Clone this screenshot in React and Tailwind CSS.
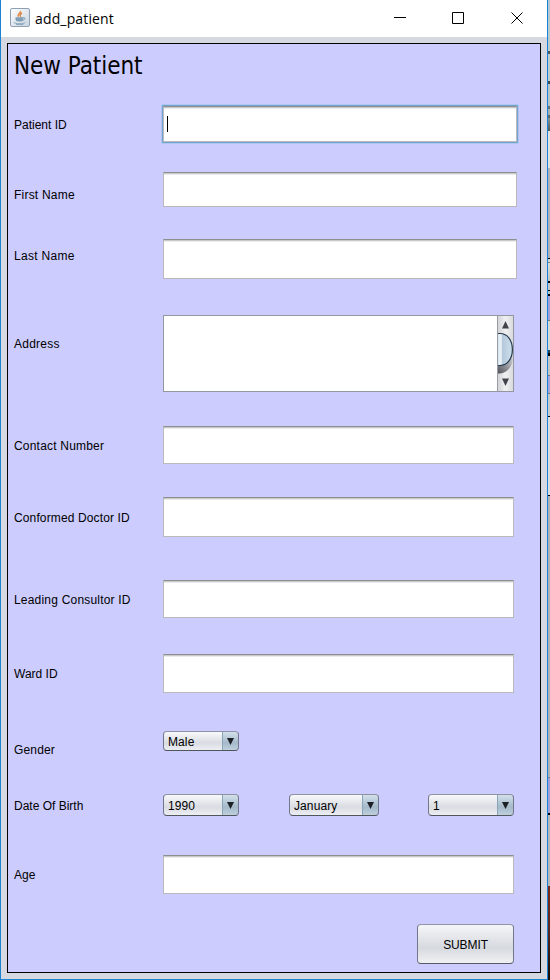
const edge = [
  ['h-[20px]', 'bg-[#b4c6d0]'], ['h-[31px]', 'bg-[#b9cbd0]'], ['h-[3px]', 'bg-[#4b5961]'],
  ['h-[27px]', 'bg-[#bccdd0]'], ['h-[3px]', 'bg-[#3c4a50]'], ['h-[22px]', 'bg-[#b5c6cb]'],
  ['h-[3px]', 'bg-[#64747a]'], ['h-[6px]', 'bg-[#a3b1b6]'], ['h-[3px]', 'bg-[#5a676b]'],
  ['h-[13px]', 'bg-linear-to-b from-[#89979a] to-[#4e5a5c]'], ['h-[37px]', 'bg-[#e2e2e2]'],
  ['h-[90px]', 'bg-[#b2b1bb]'], ['h-[1px]', 'bg-black'], ['h-[3px]', 'bg-[#d6d6d6]'],
  ['h-[1px]', 'bg-[#808080]'], ['h-[18px]', 'bg-linear-to-b from-[#e0e0e0] to-[#c0c0c0]'],
  ['h-[2px]', 'bg-black'], ['h-[7px]', 'bg-[#c4c4ca]'], ['h-[1px]', 'bg-black'],
  ['h-[3px]', 'bg-[#a9c3d2]'], ['h-[2px]', 'bg-black'], ['h-[24px]', 'bg-[#a2a0dc]'],
  ['h-[1px]', 'bg-[#777]'], ['h-[29px]', 'bg-[#d6dad8]'], ['h-[3px]', 'bg-[#1b4a70]'],
  ['h-[3px]', 'bg-black'], ['h-[19px]', 'bg-[#c6c6c8]'], ['h-[1px]', 'bg-[#777]'],
  ['h-[17px]', 'bg-[#a7a5dd]'], ['h-[1px]', 'bg-[#777]'], ['h-[22px]', 'bg-[#c9c9cd]'],
  ['h-[1px]', 'bg-black'], ['h-[78px]', 'bg-[#dcdce0]'], ['h-[1px]', 'bg-black'],
  ['h-[281px]', 'bg-[#b2b1b8]'], ['h-[1px]', 'bg-[#808080]'], ['h-[35px]', 'bg-[#a2a0dc]'],
  ['h-[2px]', 'bg-black'], ['h-[71px]', 'bg-[#b7b7bb]'],
  ['h-[94px]', 'bg-linear-to-b from-[#7c2c1c] via-[#58281e] to-[#100c0c]'],
];

function JavaIcon() {
  return (
    <svg className="block shrink-0" width="20" height="20" viewBox="0 0 20 20" fill="none">
      <defs>
        <linearGradient id="tile" x1="0" y1="0" x2="1" y2="1">
          <stop stopColor="#fff" />
          <stop offset="1" stopColor="#c8d4df" />
        </linearGradient>
      </defs>
      <rect x=".5" y=".5" width="19" height="18" rx="1.5" fill="url(#tile)" stroke="#8fa0b4" />
      <path d="M10.500 3c.7 1.900-3.300 2.700-2 5.700M12 5c-2 1.200-2.300 1.900-1.200 3.900" stroke="#e08a48" strokeWidth="1.500" />
      <path d="M5.500 9.300h7.700v2.300c0 1.300-1 2-2.300 2H8c-1.300 0-2.500-.7-2.500-2z" fill="#7f9db6" />
      <path d="M13 9.800c2.500-.9 2.800 1.700 0 2.600" stroke="#7f9db6" />
      <path d="M3.500 14.300c2 1.800 10 1.800 12 0M6 16.300c2.500.5 5 .5 7.500 0" stroke="#8ba5bb" />
    </svg>
  );
}

function Row({ className, labelClass, label, children }) {
  return (
    <div className={`flex items-start ${className}`}>
      <div className={`w-[149px] shrink-0 text-[12px] leading-4 whitespace-nowrap ${labelClass}`}>{label}</div>
      {children}
    </div>
  );
}

function Field({ className }) {
  return (
    <div className={`border border-[#bababa] border-t-[#8d8e8f] bg-white shadow-[inset_0_1px_0_#c9c9c9,inset_0_2px_0_#ececec] ${className}`} />
  );
}

function Combo({ className, value }) {
  return (
    <div className={`flex overflow-hidden rounded-[4px] border border-[#72788a] border-t-[#8f92a5] border-b-[#50565e] bg-linear-to-b from-[#f8f9fb] via-[#d9dce2] via-60% to-[#eceef2] ${className}`}>
      <div className="flex grow items-center pt-px pl-1 text-[12px] leading-4 tracking-[0.1px]">{value}</div>
      <div className="-my-px -mr-px flex w-[17px] items-center justify-center rounded-r-[4px] border border-[#466079] border-l-[#8ba5b8] border-t-[#7590a6] bg-linear-to-b from-[#d3e0ea] via-[#a4b9ca] via-60% to-[#bfd0dd]">
        <svg width="7" height="7" viewBox="0 0 7 7"><path d="M0 0h7L3.500 7z" fill="#1c1f24" /></svg>
      </div>
    </div>
  );
}

function ScrollBar() {
  return (
    <div className="flex h-full w-[16px] flex-col items-center justify-between border-l border-[#9a9da5] bg-linear-to-r from-[#d2d5d8] via-[#f0f1f2] to-[#d8dadd]">
      <svg className="block" width="15" height="75" viewBox="0 0 15 75">
        <path d="M4 12.500h7L7.500 5z" fill="#40444a" />
        <defs>
          <linearGradient id="thumb">
            <stop stopColor="#b7cbdc" /><stop offset=".15" stopColor="#e9f1f7" />
            <stop offset=".3" stopColor="#dfe9f1" /><stop offset=".36" stopColor="#b3c8da" />
            <stop offset="1" stopColor="#cfe1ee" />
          </linearGradient>
          <linearGradient id="shade" x1="0" y1="1" x2="1" y2="0">
            <stop stopColor="#50545a" /><stop offset="1" stopColor="#d5d7da" />
          </linearGradient>
        </defs>
        <path d="M0 40H15C15 51 9 57.500 0 57.500z" fill="url(#shade)" />
        <path d="M-1 17.500H2C10 17.500 14.400 25 14.400 33.500S10 49.500 2 49.500H-1z" fill="url(#thumb)" stroke="#26394d" strokeWidth="1.200" />
        <path d="M4 62.500h7L7.500 70z" fill="#40444a" />
      </svg>
    </div>
  );
}

export default function App() {
  return (
    <div className="flex h-[980px] w-[550px] overflow-hidden font-['Liberation_Sans',Arial,sans-serif] text-black">
      <div className="flex w-[548px] shrink-0 flex-col border-x border-b border-[#1c82d4] bg-[#d6d9df]">
        <div className="flex h-[37px] shrink-0 items-start bg-white pl-[9px]">
          <div className="pt-2"><JavaIcon /></div>
          <div className="pt-[9px] pl-[5px] font-['Open_Sans','Noto_Sans',sans-serif] text-[14px] leading-5 tracking-[0.15px]">add_patient</div>
          <svg className="mt-[11px] mr-[23px] ml-auto block" width="130" height="14" viewBox="0 0 130 14" fill="none" stroke="#000">
            <path d="M0 6.500h12M58.500 1.500h11v11h-11z" />
            <path d="M117.500 1.500l11 11M128.500 1.500l-11 11" />
          </svg>
        </div>
        <div className="mt-[6px] ml-[6px] flex h-[930px] w-[534px] flex-col border border-black bg-[#ccccff] pl-[6px]">
          <h1 className="h-[60px] pt-2 font-['DejaVu_Sans_Condensed','DejaVu_Sans',sans-serif] text-[24px] leading-7 tracking-[-0.05px] [font-stretch:condensed]">New Patient</h1>
          <Row className="h-10" labelClass="pt-[13px]" label="Patient ID">
            <div className="-ml-[2px] h-10 w-[358px] rounded-[2px] border border-[#b0c5f2] bg-[#73a4d1] p-px">
              <div className="h-full border border-[#bababa] border-t-[#8d8e8f] bg-white pt-[9px] pl-[3px] shadow-[inset_0_1px_0_#c9c9c9,inset_0_2px_0_#ececec]">
                <div className="h-4 w-px bg-black" />
              </div>
            </div>
          </Row>
          <Row className="mt-7 h-[35px]" labelClass="pt-[15px] tracking-[0.22px]" label="First Name"><Field className="h-[35px] w-[354px]" /></Row>
          <Row className="mt-8 h-10" labelClass="pt-[9px] tracking-[0.3px]" label="Last Name"><Field className="h-10 w-[354px]" /></Row>
          <Row className="mt-9 h-[77px]" labelClass="pt-[21px] tracking-[0.25px]" label="Address">
            <div className="flex h-[77px] w-[351px] justify-end border border-[#9297a1] bg-white"><ScrollBar /></div>
          </Row>
          <Row className="mt-[34px] h-[38px]" labelClass="pt-3 tracking-[0.2px]" label="Contact Number"><Field className="h-[38px] w-[351px]" /></Row>
          <Row className="mt-[33px] h-10" labelClass="pt-[13px] tracking-[0.13px]" label="Conformed Doctor ID"><Field className="h-10 w-[351px]" /></Row>
          <Row className="mt-[43px] h-[38px]" labelClass="pt-3 tracking-[0.2px]" label="Leading Consultor ID"><Field className="h-[38px] w-[351px]" /></Row>
          <Row className="mt-9 h-[39px]" labelClass="pt-3" label="Ward ID"><Field className="h-[39px] w-[351px]" /></Row>
          <Row className="mt-[38px] h-[27px]" labelClass="pt-[11px] tracking-[0.15px]" label="Gender"><Combo className="h-[20px] w-[76px]" value="Male" /></Row>
          <Row className="mt-[36px] h-[22px]" labelClass="pt-1" label="Date Of Birth">
            <Combo className="h-[22px] w-[76px]" value="1990" />
            <Combo className="ml-[50px] h-[22px] w-[90px]" value="January" />
            <Combo className="ml-[49px] h-[22px] w-[86px]" value="1" />
          </Row>
          <Row className="mt-[39px] h-[39px]" labelClass="pt-3" label="Age"><Field className="h-[39px] w-[351px]" /></Row>
          <button className="mt-[30px] ml-[403px] h-10 w-[97px] shrink-0 rounded-[4px] border border-[#72788a] border-t-[#9294a8] border-b-[#565c66] bg-linear-to-b from-[#f5f6f8] via-[#d6d9df] via-60% to-[#f0f1f4] pt-px text-[12px] leading-4 tracking-[-0.1px]">SUBMIT</button>
        </div>
      </div>
      <div className="flex w-[2px] shrink-0 flex-col">
        {edge.map(([h, bg], i) => <div key={i} className={`w-full shrink-0 ${h} ${bg}`} />)}
      </div>
    </div>
  );
}
